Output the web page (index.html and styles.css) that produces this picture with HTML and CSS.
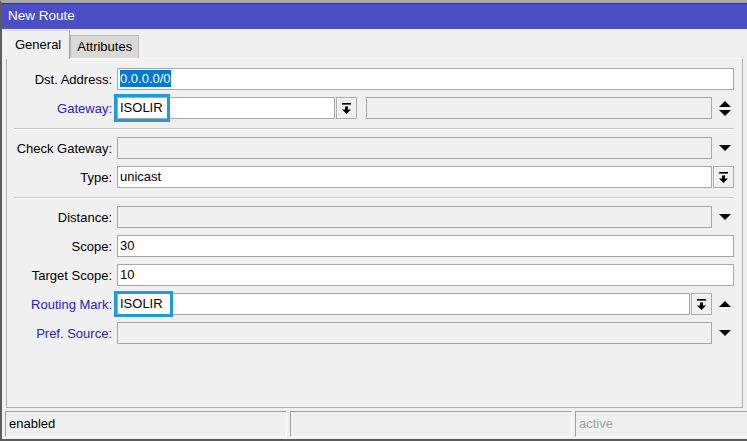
FILE: index.html
```html
<!DOCTYPE html>
<html>
<head>
<meta charset="utf-8">
<title>New Route</title>
<link rel="stylesheet" href="styles.css">
</head>
<body>
<div class="window">
  <div class="titlebar">New Route</div>
  <div class="tabs">
    <div class="tab active">General</div>
    <div class="tab">Attributes</div>
  </div>
  <div class="panel">
    <div class="row">
      <div class="lbl">Dst. Address:</div>
      <div class="field"><div class="input grow"><span class="sel">0.0.0.0/0</span></div></div>
    </div>
    <div class="row">
      <div class="lbl blue">Gateway:</div>
      <div class="field">
        <div class="input gw">ISOLIR<span class="mark mark-gw"></span></div>
        <div class="btn"><svg width="9" height="11" viewBox="0 0 9 11"><rect x="0" y="0" width="9" height="1.6"/><path d="M3 3.5h3v3h3L4.5 11 0 6.5h3z"/></svg></div>
        <div class="input disabled grow second"></div>
        <div class="trail"><svg width="12" height="15" viewBox="0 0 12 15"><path d="M0 6h12L6 0z"/><path d="M0 9h12L6 15z"/></svg></div>
      </div>
    </div>
    <div class="sep"></div>
    <div class="row">
      <div class="lbl">Check Gateway:</div>
      <div class="field">
        <div class="input disabled grow"></div>
        <div class="trail"><svg width="12" height="6" viewBox="0 0 12 6"><path d="M0 0h12L6 6z"/></svg></div>
      </div>
    </div>
    <div class="row">
      <div class="lbl">Type:</div>
      <div class="field">
        <div class="input grow">unicast</div>
        <div class="btn"><svg width="9" height="11" viewBox="0 0 9 11"><rect x="0" y="0" width="9" height="1.6"/><path d="M3 3.5h3v3h3L4.5 11 0 6.5h3z"/></svg></div>
      </div>
    </div>
    <div class="sep"></div>
    <div class="row">
      <div class="lbl">Distance:</div>
      <div class="field">
        <div class="input disabled grow"></div>
        <div class="trail"><svg width="12" height="6" viewBox="0 0 12 6"><path d="M0 0h12L6 6z"/></svg></div>
      </div>
    </div>
    <div class="row">
      <div class="lbl">Scope:</div>
      <div class="field"><div class="input grow">30</div></div>
    </div>
    <div class="row">
      <div class="lbl">Target Scope:</div>
      <div class="field"><div class="input grow">10</div></div>
    </div>
    <div class="row">
      <div class="lbl blue">Routing Mark:</div>
      <div class="field">
        <div class="input grow">ISOLIR<span class="mark mark-rm"></span></div>
        <div class="btn"><svg width="9" height="11" viewBox="0 0 9 11"><rect x="0" y="0" width="9" height="1.6"/><path d="M3 3.5h3v3h3L4.5 11 0 6.5h3z"/></svg></div>
        <div class="trail"><svg width="12" height="6" viewBox="0 0 12 6"><path d="M0 6h12L6 0z"/></svg></div>
      </div>
    </div>
    <div class="row">
      <div class="lbl blue">Pref. Source:</div>
      <div class="field">
        <div class="input disabled grow"></div>
        <div class="trail"><svg width="12" height="6" viewBox="0 0 12 6"><path d="M0 0h12L6 6z"/></svg></div>
      </div>
    </div>
  </div>
  <div class="status">
    <div class="cell">enabled</div>
    <div class="cell"></div>
    <div class="cell last muted">active</div>
  </div>
</div>
</body>
</html>
```
FILE: styles.css
```css
* { box-sizing: border-box; }
html, body { margin: 0; padding: 0; }
body {
  background: #f0f0f0;
  font-family: "Liberation Sans", Arial, sans-serif;
  font-size: 13px;
  color: #000;
  width: 747px;
  height: 441px;
  overflow: hidden;
}
.window {
  width: 747px;
  height: 441px;
  border-top: 3px solid #a9a9a9;
  border-left: 2px solid #5c5c5c;
  border-bottom: 2px solid #5c5c5c;
  display: flex;
  flex-direction: column;
  background: #f0f0f0;
}
.titlebar {
  height: 26px;
  border-top: 1px solid #3c3c5a;
  background: #4a4fc6;
  color: #fff;
  line-height: 24px;
  padding-left: 6px;
  font-size: 13.5px;
  flex: none;
}
.tabs {
  height: 29px;
  display: flex;
  align-items: flex-end;
  padding-left: 4px;
  flex: none;
  position: relative;
  z-index: 1;
}
.tab {
  height: 23px;
  padding: 0 6px;
  line-height: 22px;
  background: #d9d9d9;
  border: 1px solid #b9b9b9;
  border-bottom: none;
}
.tab.active {
  height: 29px;
  margin-bottom: -1px;
  padding: 0 8px;
  line-height: 28px;
  background: #f0f0f0;
  border-top-color: #d6d6d6;
  border-left-color: #fff;
  border-right-color: #a5a5a5;
}
.panel {
  flex: 1;
  margin-left: 4px;
  margin-right: 4px;
  border: 1px solid #b0b0b0;
  border-top-color: #fff;
  padding: 9px 8px 0 0;
  display: flex;
  flex-direction: column;
  gap: 7px;
}
.row {
  display: flex;
  align-items: center;
  height: 22px;
}
.lbl {
  width: 105px;
  margin-right: 5px;
  text-align: right;
  white-space: nowrap;
  flex: none;
}
.lbl.blue { color: #2323c2; }
.field {
  flex: 1;
  display: flex;
  align-items: center;
  height: 22px;
}
.input {
  position: relative;
  height: 22px;
  border: 1px solid #a8a8a8;
  background: #fff;
  line-height: 20px;
  padding-left: 2px;
  white-space: nowrap;
}
.input.grow { flex: 1; }
.input.gw { width: 218px; flex: none; }
.input.disabled { background: #f0f0f0; }
.input.second { margin-left: 9px; }
.sel {
  background: #0078d7;
  color: #fff;
  display: inline-block;
  line-height: 17px;
}
.btn {
  flex: none;
  width: 21px;
  height: 22px;
  margin-left: 1px;
  border: 1px solid #ababab;
  background: #f0f0f0;
  box-shadow: inset 1px 1px 0 #fff;
  display: flex;
  align-items: center;
  justify-content: center;
}
.trail {
  flex: none;
  width: 22px;
  height: 22px;
  padding-left: 7px;
  display: flex;
  align-items: center;
}
.mark {
  position: absolute;
  border: 3px solid #1e9bd8;
  left: -4px;
}
.mark-gw { top: -4px; width: 56px; height: 28px; }
.mark-rm { top: -3px; width: 59px; height: 26px; }
.sep {
  height: 2px;
  margin: 2px 0 0 7px;
  border-top: 1px solid #c6c6c6;
  border-bottom: 1px solid #fff;
}
.status {
  flex: none;
  height: 26px;
  margin: 3px 0 2px 0;
  padding-left: 3px;
  display: flex;
  gap: 3px;
}
.cell {
  width: 282px;
  height: 26px;
  border-top: 1px solid #a0a0a0;
  border-left: 1px solid #a0a0a0;
  border-right: 1px solid #fff;
  border-bottom: 1px solid #fff;
  padding-left: 3px;
  line-height: 24px;
}
.cell.last { flex: 1; border-right: none; }
.muted { color: #a3a3a3; }
```
